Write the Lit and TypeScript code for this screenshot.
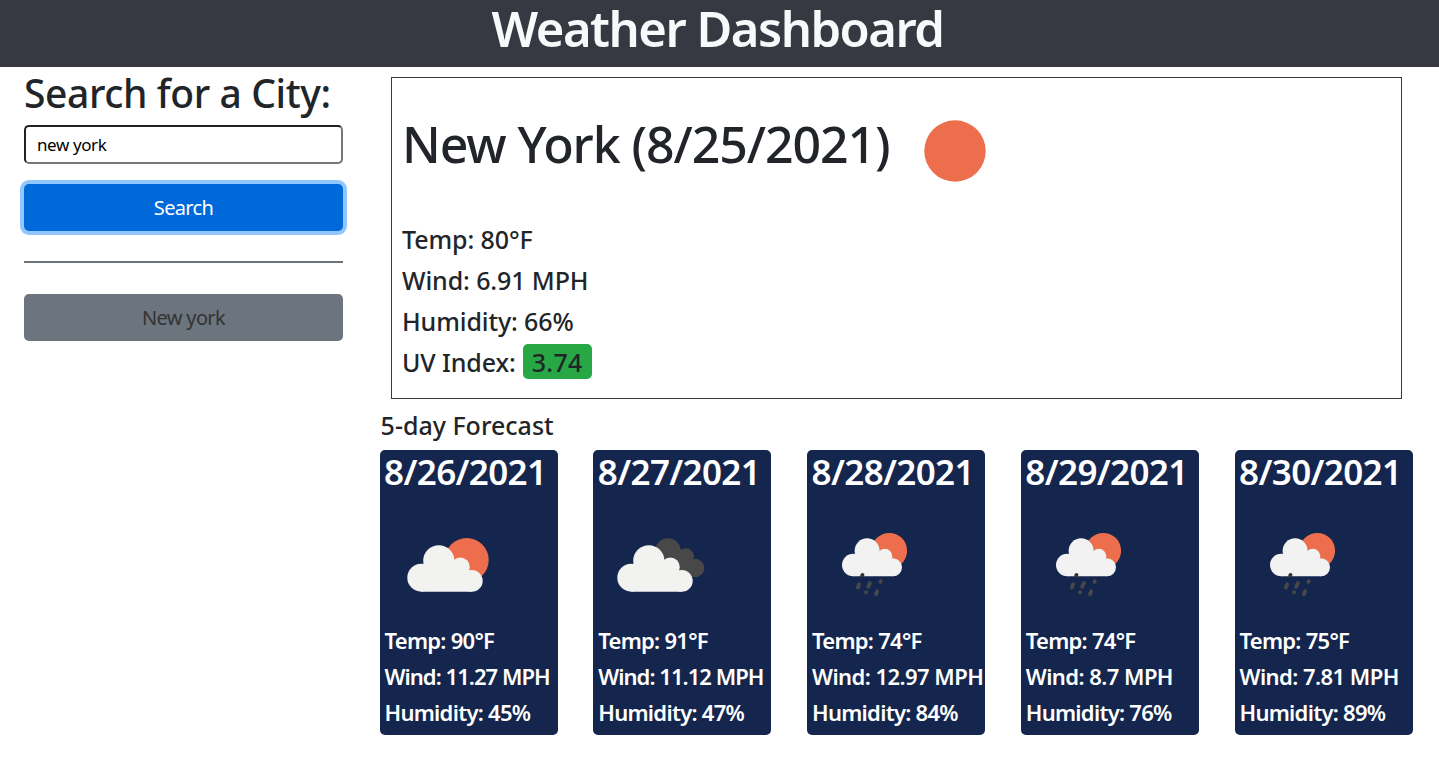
import { LitElement, html, css, svg } from "lit";
import { customElement, property } from "lit/decorators.js";
import { classMap } from "lit/directives/class-map.js";

type Sky = "sun-cloud" | "clouds" | "rain";
interface Day { date: string; sky: Sky; temp: string; wind: string; humidity: string }

const days: Day[] = [
  { date: "8/26/2021", sky: "sun-cloud", temp: "90°F", wind: "11.27 MPH", humidity: "45%" },
  { date: "8/27/2021", sky: "clouds", temp: "91°F", wind: "11.12 MPH", humidity: "47%" },
  { date: "8/28/2021", sky: "rain", temp: "74°F", wind: "12.97 MPH", humidity: "84%" },
  { date: "8/29/2021", sky: "rain", temp: "74°F", wind: "8.7 MPH", humidity: "76%" },
  { date: "8/30/2021", sky: "rain", temp: "75°F", wind: "7.81 MPH", humidity: "89%" },
];

const cloud = svg`
  <circle cx="26.3" cy="52.7" r="14"/>
  <circle cx="43.8" cy="35.8" r="15.6"/>
  <circle cx="65.3" cy="42" r="9.5"/>
  <circle cx="76.8" cy="55.9" r="10.9"/>
  <path d="M26.3 66.7V40H60l16.8 8v18.7z"/>`;

const skies: Record<Sky, unknown> = {
  "sun-cloud": svg`<g transform="translate(15 33)">
    <circle cx="71.7" cy="35" r="22" fill="#ec6e4c"/>
    <g fill="#f2f2f0">${cloud}</g></g>`,
  clouds: svg`<g transform="translate(12 33)">
    <g fill="#484848"><circle cx="63" cy="26" r="12.8"/><circle cx="81" cy="31.3" r="8"/><circle cx="90.2" cy="42.9" r="9.2"/><path d="M63 20l18 6 8 10-2 15-25-8z"/></g>
    <g fill="#f2f2f0">${cloud}</g></g>`,
  rain: svg`<g transform="translate(18 33)">
    <circle cx="64.3" cy="25.7" r="17.8" fill="#ec6e4c"/>
    <g fill="#f2f2f2">
      <circle cx="28.3" cy="40" r="11.3"/><circle cx="42.1" cy="25.8" r="12.5"/>
      <circle cx="59.8" cy="31.2" r="7.5"/><circle cx="68" cy="42.3" r="9"/>
      <path d="M28.3 51.3V30H56l12 6v15.3z"/></g>
    <g stroke="#484848" stroke-width="3.8" stroke-linecap="round">
      <path d="M34 59.4l-1.1 3.2M44.9 58.2l-1.7 3.6M52.2 66.3l-1.2 2.9"/>
      <path d="M55.8 56.3l-.3.6M41.2 67.2l-.1.3"/>
      <path d="M37.5 50l-.4.7" stroke="#333"/></g></g>`,
};

@customElement("forecast-card")
class ForecastCard extends LitElement {
  @property({ attribute: false }) day!: Day;
  static styles = css`
    :host { display: block; height: 285px; border-radius: 5px; background: #14264d; color: #fff; font-weight: 600; }
    .date { margin: 0; padding-left: 4.5px; font-size: 35px; line-height: 44px; height: 42px; font-weight: 600; letter-spacing: -0.65px; white-space: nowrap; }
    .sky { display: block; width: 178px; height: 130px; }
    .line { padding-left: 4.9px; font-size: 22px; line-height: 36px; height: 36px; white-space: nowrap; letter-spacing: -0.72px; }
    .wind { letter-spacing: -0.55px; }
    .narrow { letter-spacing: -0.95px; }
  `;
  render() {
    const d = this.day;
    return html`<h3 class="date">${d.date}</h3>
      <svg class="sky" viewBox="0 0 178 130">${skies[d.sky]}</svg>
      <div class="line">Temp: ${d.temp}</div>
      <div class=${classMap({ line: true, wind: true, narrow: d.wind.startsWith("11") })}>Wind: ${d.wind}</div>
      <div class="line">Humidity: ${d.humidity}</div>`;
  }
}

@customElement("app-root")
class AppRoot extends LitElement {
  static styles = css`
    :host { display: block; height: 763px; overflow: hidden; background: #fff; color: #212529; font-family: "Noto Sans", "Open Sans", sans-serif; }
    * { box-sizing: border-box; }
    .top { height: 67px; background: #363941; color: #f8f9fa; text-align: center; }
    .title { margin: 0; padding-right: 4px; font-size: 49px; line-height: 56px; font-weight: 600; letter-spacing: -1.5px; }
    .body { display: flex; }
    .side { width: 343px; padding-left: 24px; display: flex; flex-direction: column; }
    .find { margin: 0; font-size: 39px; line-height: 52px; height: 58px; font-weight: 500; letter-spacing: -0.4px; white-space: nowrap; }
    .field { height: 39px; border: 2px solid; border-color: #212121 #767676 #767676 #212121; border-radius: 5px; padding: 0 11px; font: 17px/34px "Noto Sans", sans-serif; letter-spacing: -0.4px; color: #000; background: #fff; }
    .btn { height: 47px; border: 0; border-radius: 5px; font: 20px/47px "Noto Sans", sans-serif; letter-spacing: -0.65px; padding: 0; text-align: center; }
    .go { margin-top: 20px; background: #0069d9; color: #fff; box-shadow: 0 0 0 4px #92c6ff; }
    .rule { height: 2px; margin: 30px 0 31px; background: #6c757d; }
    .past { background: #6c757d; color: #333; }
    .main { margin-left: 36.6px; width: 1033px; }
    .now { margin: 10px 11px 0 11px; width: 1011px; height: 322px; border: 1px solid #343a40; padding: 35px 0 0 10.4px; }
    .head { display: flex; height: 106px; }
    .city { margin: 0; font-size: 50px; line-height: 63px; font-weight: 500; letter-spacing: -1.08px; white-space: nowrap; width: 521px; }
    .sun { width: 64px; height: 64px; margin-top: 6px; }
    .stat { font-size: 25px; line-height: 41px; height: 41px; font-weight: 500; letter-spacing: -0.1px; display: flex; white-space: nowrap; }
    .uv { margin: 2px 0 0 7px; width: 69px; height: 35px; line-height: 37px; border-radius: 5px; background: #28a745; text-align: center; letter-spacing: 0.3px; }
    .sub { margin: 11px 0 0 1px; font-size: 25px; line-height: 30px; height: 40px; font-weight: 500; }
    .days { display: grid; grid-template-columns: repeat(5, 178px); justify-content: space-between; }
  `;
  render() {
    return html`<header class="top"><h1 class="title">Weather Dashboard</h1></header>
      <div class="body">
        <aside class="side">
          <h2 class="find">Search for a City:</h2>
          <input class="field" .value=${"new york"} />
          <button class="btn go">Search</button>
          <div class="rule"></div>
          <button class="btn past">New york</button>
        </aside>
        <main class="main">
          <section class="now">
            <div class="head"><h2 class="city">New York (8/25/2021)</h2>
              <svg class="sun" viewBox="0 0 64 64"><circle cx="32" cy="32" r="30.7" fill="#ec6e4c"/></svg></div>
            <div class="stat">Temp: 80°F</div>
            <div class="stat">Wind: 6.91 MPH</div>
            <div class="stat">Humidity: 66%</div>
            <div class="stat">UV Index:<div class="uv">3.74</div></div>
          </section>
          <h4 class="sub">5-day Forecast</h4>
          <div class="days">${days.map((d) => html`<forecast-card .day=${d}></forecast-card>`)}</div>
        </main>
      </div>`;
  }
}
